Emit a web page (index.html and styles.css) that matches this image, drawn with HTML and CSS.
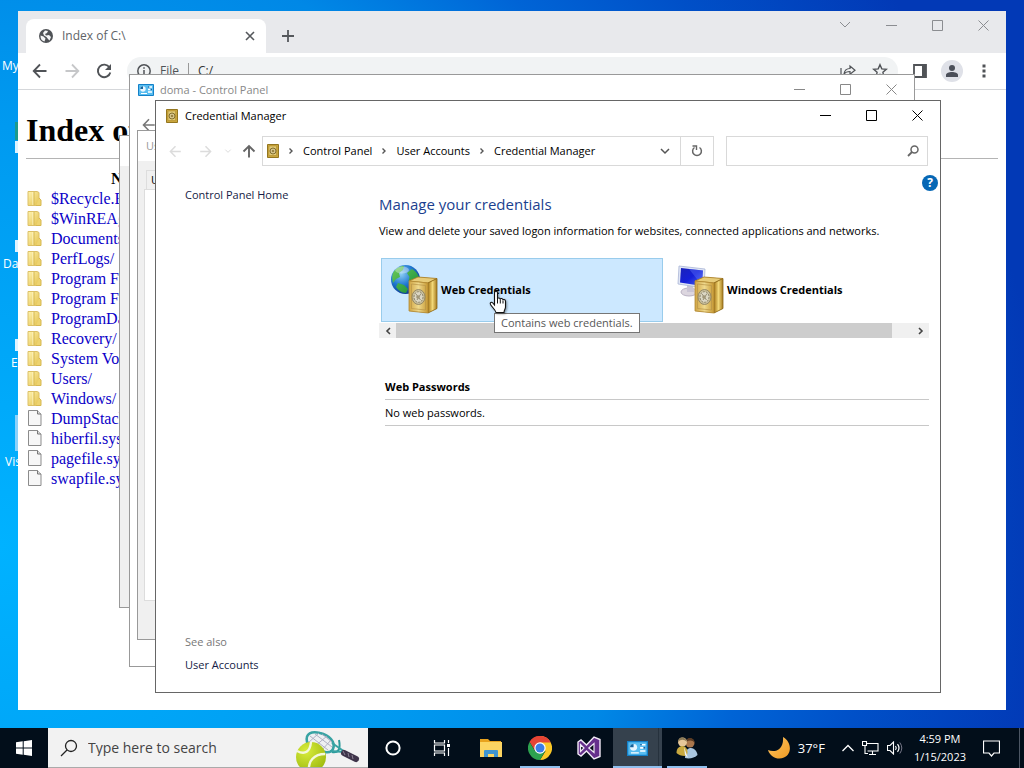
FILE: index.html
```html
<!DOCTYPE html>
<html lang="en">
<head>
    <meta charset="UTF-8">
    <title>Desktop</title>
    <link rel="stylesheet" href="styles.css">
</head>
<body>
    <svg class="sprite" aria-hidden="true">
        <defs>
            <linearGradient id="gold" x1="0" y1="0" x2="1" y2="0">
                <stop offset="0" stop-color="#d0a443"/><stop offset=".5" stop-color="#efd98d"/><stop offset="1" stop-color="#c69832"/>
            </linearGradient>
            <linearGradient id="goldSide" x1="0" y1="0" x2="1" y2="0">
                <stop offset="0" stop-color="#a87817"/><stop offset=".5" stop-color="#f2d878"/><stop offset="1" stop-color="#a57a1f"/>
            </linearGradient>
            <radialGradient id="globe" cx=".35" cy=".3" r=".8">
                <stop offset="0" stop-color="#8fd0f5"/><stop offset=".5" stop-color="#1f78d0"/><stop offset="1" stop-color="#0a2c80"/>
            </radialGradient>
            <linearGradient id="land" x1="0" y1="0" x2="1" y2="1">
                <stop offset="0" stop-color="#6ccb5a"/><stop offset="1" stop-color="#138a35"/>
            </linearGradient>
            <linearGradient id="screen" x1="0" y1="0" x2="1" y2="1">
                <stop offset="0" stop-color="#1a22b8"/><stop offset=".5" stop-color="#1520d8"/><stop offset="1" stop-color="#5068ee"/>
            </linearGradient>
            <linearGradient id="folder" x1="0" y1="0" x2="1" y2="1">
                <stop offset="0" stop-color="#fff3ae"/><stop offset="1" stop-color="#e3c14e"/>
            </linearGradient>
            <radialGradient id="ball" cx=".35" cy=".3" r=".8">
                <stop offset="0" stop-color="#d8ec3c"/><stop offset="1" stop-color="#9cb80c"/>
            </radialGradient>
            <linearGradient id="moon" x1="0" y1="0" x2="1" y2="1">
                <stop offset="0" stop-color="#ffc560"/><stop offset="1" stop-color="#ee9a24"/>
            </linearGradient>
        </defs>
        <symbol id="min" viewBox="0 0 11 11"><path d="M0 5.5h11" stroke="currentColor"/></symbol>
        <symbol id="max" viewBox="0 0 11 11"><path d="M.5.5h10v10H.5z" fill="none" stroke="currentColor"/></symbol>
        <symbol id="close" viewBox="0 0 11 11"><path d="M.5.5l10 10M10.5.5l-10 10" stroke="currentColor"/></symbol>
        <symbol id="left" viewBox="0 0 16 16"><path d="M14.5 8H2M8 1.5L1.7 8 8 14.5" fill="none" stroke="currentColor" stroke-width="1.8"/></symbol>
        <symbol id="right" viewBox="0 0 16 16"><path d="M1.5 8H14M8 1.5L14.3 8 8 14.5" fill="none" stroke="currentColor" stroke-width="1.8"/></symbol>
        <symbol id="chev" viewBox="0 0 8 8"><path d="M2.500 1.500L5 4 2.500 6.500" fill="none" stroke="currentColor" stroke-width="1.400"/></symbol>
        <symbol id="down" viewBox="0 0 12 8"><path d="M2 2l4 4 4-4" fill="none" stroke="currentColor" stroke-width="1.500"/></symbol>
        <symbol id="safe" viewBox="0 0 12 14">
            <path d="M.5.5h11v13H.5z" fill="#c9a53c" stroke="#94761f"/>
            <path d="M2 2h7.500v9.500H2z" fill="#e2cb78" stroke="#b28f2e" stroke-width=".6"/>
            <circle cx="6" cy="7" r="3" fill="#d5c48b" stroke="#786427" stroke-width=".9"/>
            <circle cx="6" cy="7" r="1.100" fill="#8a7433"/>
        </symbol>
        <symbol id="panel" viewBox="0 0 16 12">
            <path d="M.5.5h15v11H.5z" fill="#58bdf0" stroke="#1380c8"/>
            <circle cx="5" cy="5" r="2.700" fill="#e8f6ff"/><path d="M5 5V2.300A2.700 2.700 0 0 0 2.300 5z" fill="#17639c"/>
            <path d="M3 9.500h6" stroke="#fff"/><path d="M10 3h4M10 5.500h4M10 8h4" stroke="#fff" stroke-width="1.300"/><path d="M10 3h1.300M12.500 5.500h1.500" stroke="#1266a8" stroke-width="1.300"/>
        </symbol>
        <symbol id="bigsafe" viewBox="0 0 30 38">
            <path d="M1 5L10 1l19 1.500v30L20 37 1 35z" fill="#b8892a"/>
            <path d="M1 5l9-4 19 1.500L20 7z" fill="#e7cc79" stroke="#a77c24" stroke-width=".8"/>
            <path d="M20 7l9-4.500v30L20 37z" fill="url(#goldSide)" stroke="#8c681b" stroke-width=".8"/>
            <path d="M1 5l19 2v30L1 35z" fill="url(#gold)" stroke="#b38a35" stroke-width=".8"/>
            <path d="M3.500 8l14 1.500V34l-14-1.500z" fill="none" stroke="#b79347" stroke-width=".7"/>
            <ellipse cx="10.500" cy="21" rx="6.500" ry="7.500" fill="#c9bf9c" stroke="#8f8260" stroke-width=".9"/>
            <ellipse cx="10.500" cy="21" rx="4.500" ry="5.300" fill="#dcd7c4" stroke="#857e68" stroke-width=".9" stroke-dasharray="2 1"/>
            <path d="M8 18l4.500 6M13 17.500l-4 6.500" stroke="#8c846c" stroke-width=".9"/><circle cx="10" cy="21" r="1.800" fill="#a0977a"/>
        </symbol>
        <symbol id="dir" viewBox="0 0 16 17">
            <path d="M1 1.500h9l2 1v13H1z" fill="url(#folder)" stroke="#dcc067"/><path d="M6 2v13" stroke="#fff9d0"/><path d="M7 2v13M12 8l2 2v5.500H9" fill="#edd36f" stroke="#d6b852"/>
        </symbol>
        <symbol id="doc" viewBox="0 0 16 17"><path d="M1.500.5h9l3.500 3.500v11.500H1.500z" fill="#f7f7f7" stroke="#8b8b8b"/><path d="M10.500.5V4H14" fill="#ddd" stroke="#777"/></symbol>
    </svg>

    <main class="desktop">
        <span class="shortcut my">My</span>
        <span class="shortcut da">Da</span>
        <span class="shortcut e">E</span>
        <span class="shortcut vis">Vis</span>
        <i class="shard s1"></i><i class="shard s2"></i><i class="shard s3"></i><i class="shard s4"></i><i class="shard s5"></i>

        <section class="window chrome">
            <header class="tabstrip">
                <div class="tab">
                    <svg width="14" height="14" viewBox="0 0 14 14"><circle cx="7" cy="7" r="7" fill="#505357"/><path d="M1.500 6.500l3 1 2 2-1 3C3 12 1.300 10 1.500 6.500zM6 1.500l3 .5-1 2-2 1 1 1.500 3-.5 2 2-1.500 3.500L9 10 7.500 8 5 6.500 4 4z" fill="#f4f5f6"/></svg>
                    <span>Index of C:\</span>
                    <button class="plain" aria-label="Close tab"><svg width="10" height="10" viewBox="0 0 10 10"><path d="M1 1l8 8M9 1L1 9" stroke="#55585c" stroke-width="1.600"/></svg></button>
                </div>
                <button class="plain newtab" aria-label="New tab"><svg width="12" height="12" viewBox="0 0 12 12"><path d="M6 0v12M0 6h12" stroke="#55585c" stroke-width="1.800"/></svg></button>
                <div class="caption">
                    <button aria-label="Search tabs"><svg width="12" height="8" viewBox="0 0 12 8"><path d="M1 1l5 5 5-5" fill="none" stroke="currentColor"/></svg></button>
                    <button aria-label="Minimize"><svg width="11" height="11"><use href="#min"/></svg></button>
                    <button aria-label="Maximize"><svg width="11" height="11"><use href="#max"/></svg></button>
                    <button aria-label="Close"><svg width="11" height="11"><use href="#close"/></svg></button>
                </div>
            </header>
            <div class="toolbar">
                <button class="tool" aria-label="Back"><svg width="16" height="16"><use href="#left"/></svg></button>
                <button class="tool faded" aria-label="Forward"><svg width="16" height="16"><use href="#right"/></svg></button>
                <button class="tool" aria-label="Reload"><svg width="16" height="16" viewBox="0 0 16 16"><path d="M13.500 4.500A6.300 6.300 0 1 0 14.300 9.500" fill="none" stroke="currentColor" stroke-width="1.900"/><path d="M15 1v6H9z" fill="currentColor"/></svg></button>
                <div class="omnibox">
                    <svg width="14" height="14" viewBox="0 0 14 14"><circle cx="7" cy="7" r="6.200" fill="none" stroke="currentColor" stroke-width="1.500"/><path d="M7 6v4.500M7 3.300v1.500" stroke="currentColor" stroke-width="1.500"/></svg>
                    <span class="scheme">File</span>
                    <span class="path">C:/</span>
                    <button class="tool" aria-label="Share"><svg width="16" height="16" viewBox="0 0 16 16"><path d="M1 5v9h12v-3M4 11c.5-4 2.500-5.500 6-5.500V3l5 4.200-5 4V8.500C7 8.500 5.500 9 4 11z" fill="none" stroke="currentColor" stroke-width="1.200"/></svg></button>
                    <button class="tool" aria-label="Bookmark"><svg width="16" height="16" viewBox="0 0 16 16"><path d="M8 1.700l1.800 4.200 4.500.4-3.400 3 1 4.400L8 11.400l-3.900 2.300 1-4.400-3.400-3 4.500-.4z" fill="none" stroke="currentColor" stroke-width="1.400"/></svg></button>
                </div>
                <button class="tool" aria-label="Side panel"><svg width="14" height="14" viewBox="0 0 14 14"><path d="M1 1h12v12H1z" fill="none" stroke="currentColor" stroke-width="1.800"/><path d="M9 1h4v12H9z" fill="currentColor"/></svg></button>
                <button class="tool" aria-label="Profile"><svg width="22" height="22" viewBox="0 0 22 22"><circle cx="11" cy="11" r="11" fill="#dfe1e8"/><circle cx="11" cy="8" r="3" fill="#4b4f59"/><path d="M5 17v-2c0-2 3-3 6-3s6 1 6 3v2z" fill="#4b4f59"/></svg></button>
                <button class="tool" aria-label="Menu"><svg width="4" height="14" viewBox="0 0 4 14"><path d="M.5.5h3v3h-3zM.5 5.500h3v3h-3zM.5 10.500h3v3h-3z" fill="currentColor"/></svg></button>
            </div>
            <div class="listing">
                <h1>Index of C:\</h1>
                <table>
                    <thead><tr><th>Name</th></tr></thead>
                    <tbody>
                        <tr><td><svg><use href="#dir"/></svg><a href="#">$Recycle.Bin/</a></td></tr>
                        <tr><td><svg><use href="#dir"/></svg><a href="#">$WinREAgent/</a></td></tr>
                        <tr><td><svg><use href="#dir"/></svg><a href="#">Documents and Settings/</a></td></tr>
                        <tr><td><svg><use href="#dir"/></svg><a href="#">PerfLogs/</a></td></tr>
                        <tr><td><svg><use href="#dir"/></svg><a href="#">Program Files/</a></td></tr>
                        <tr><td><svg><use href="#dir"/></svg><a href="#">Program Files (x86)/</a></td></tr>
                        <tr><td><svg><use href="#dir"/></svg><a href="#">ProgramData/</a></td></tr>
                        <tr><td><svg><use href="#dir"/></svg><a href="#">Recovery/</a></td></tr>
                        <tr><td><svg><use href="#dir"/></svg><a href="#">System Volume Information/</a></td></tr>
                        <tr><td><svg><use href="#dir"/></svg><a href="#">Users/</a></td></tr>
                        <tr><td><svg><use href="#dir"/></svg><a href="#">Windows/</a></td></tr>
                        <tr><td><svg><use href="#doc"/></svg><a href="#">DumpStack.log.tmp</a></td></tr>
                        <tr><td><svg><use href="#doc"/></svg><a href="#">hiberfil.sys</a></td></tr>
                        <tr><td><svg><use href="#doc"/></svg><a href="#">pagefile.sys</a></td></tr>
                        <tr><td><svg><use href="#doc"/></svg><a href="#">swapfile.sys</a></td></tr>
                    </tbody>
                </table>
            </div>
        </section>

        <section class="window blank"></section>

        <section class="window doma">
            <header class="titlebar">
                <svg width="16" height="12"><use href="#panel"/></svg>
                <span>doma - Control Panel</span>
                <div class="caption">
                    <button aria-label="Minimize"><svg width="11" height="11"><use href="#min"/></svg></button>
                    <button aria-label="Maximize"><svg width="11" height="11"><use href="#max"/></svg></button>
                    <button aria-label="Close"><svg width="11" height="11"><use href="#close"/></svg></button>
                </div>
            </header>
            <button class="plain back" aria-label="Back"><svg width="14" height="14"><use href="#left"/></svg></button>
        </section>

        <section class="window users">
            <header>Us</header>
            <div class="sheet-tab">Us</div>
            <div class="sheet"></div>
        </section>

        <section class="window cred">
            <header class="titlebar">
                <svg width="12" height="14"><use href="#safe"/></svg>
                <span>Credential Manager</span>
                <div class="caption">
                    <button aria-label="Minimize"><svg width="11" height="11"><use href="#min"/></svg></button>
                    <button aria-label="Maximize"><svg width="11" height="11"><use href="#max"/></svg></button>
                    <button aria-label="Close"><svg width="11" height="11"><use href="#close"/></svg></button>
                </div>
            </header>
            <nav class="navrow">
                <button class="nav faded" aria-label="Back"><svg width="13" height="13"><use href="#left"/></svg></button>
                <button class="nav faded" aria-label="Forward"><svg width="13" height="13"><use href="#right"/></svg></button>
                <button class="recent faded" aria-label="Recent"><svg width="8" height="6"><use href="#down"/></svg></button>
                <button class="nav up" aria-label="Up"><svg width="14" height="14" viewBox="0 0 14 14"><path d="M7 13.500V2M1.500 7.500L7 2l5.500 5.500" fill="none" stroke="currentColor" stroke-width="1.900"/></svg></button>
                <div class="address">
                    <svg width="12" height="14"><use href="#safe"/></svg>
                    <svg class="sep"><use href="#chev"/></svg>
                    <a href="#">Control Panel</a>
                    <svg class="sep"><use href="#chev"/></svg>
                    <a href="#">User Accounts</a>
                    <svg class="sep"><use href="#chev"/></svg>
                    <a href="#">Credential Manager</a>
                    <button class="drop" aria-label="Previous locations"><svg width="12" height="8"><use href="#down"/></svg></button>
                    <button class="refresh" aria-label="Refresh"><svg width="12" height="12" viewBox="0 0 12 12"><path d="M8.500 2.500A4.400 4.400 0 1 1 3.500 2.500" fill="none" stroke="currentColor" stroke-width="1.500"/><path d="M1.500 1h4v4" fill="none" stroke="currentColor" stroke-width="1.400"/></svg></button>
                </div>
                <label class="find">
                    <input type="text" aria-label="Search Control Panel">
                    <svg width="12" height="12" viewBox="0 0 12 12"><circle cx="7.500" cy="4.500" r="3.500" fill="none" stroke="#666" stroke-width="1.500"/><path d="M5 7L1 11" stroke="#666" stroke-width="1.800"/></svg>
                </label>
            </nav>
            <div class="content">
                <aside>
                    <a href="#">Control Panel Home</a>
                    <div class="see">
                        <p>See also</p>
                        <a href="#">User Accounts</a>
                    </div>
                </aside>
                <div class="main">
                    <h2>Manage your credentials</h2>
                    <p>View and delete your saved logon information for websites, connected applications and networks.</p>
                    <div class="tiles">
                        <button class="tile selected">
                            <svg width="50" height="52" viewBox="0 0 50 52"><circle cx="14.500" cy="15.500" r="14.500" fill="url(#globe)"/><path d="M2 9C5 4 9 2 13 2l-1 4-4 3 1 4-4 2-3 4c-1-4-1-7 0-10zM16 9l5-4c5 3 8 8 7.500 13l-6 1-5-2 1-4zM7 19l6 2 4 4-2 4c-4 0-8-3-10-6z" fill="url(#land)"/><ellipse cx="11" cy="6" rx="7" ry="3.500" fill="#fff" opacity=".35"/><svg x="17" y="12" width="30" height="38"><use href="#bigsafe"/></svg></svg>
                            Web Credentials
                        </button>
                        <button class="tile">
                            <svg width="50" height="52" viewBox="0 0 50 52"><ellipse cx="12" cy="28" rx="8" ry="4" fill="#dcd6df" stroke="#b9b1c2"/><path d="M10 20h6l1 8h-7z" fill="#c9c4d4"/><path d="M2 2l26 3-1 19L1 20z" fill="#dfe5f5" stroke="#aab5d6" stroke-width=".8"/><path d="M4 4l22 2.500-1 15.500-22-3.500z" fill="url(#screen)"/><path d="M12 5l14 1.500-1 15z" fill="#6c83ff" opacity=".35"/><svg x="17" y="12" width="30" height="38"><use href="#bigsafe"/></svg></svg>
                            Windows Credentials
                        </button>
                    </div>
                    <div class="scrollbar">
                        <button class="plain" aria-label="Scroll left"><svg width="8" height="8" viewBox="0 0 8 8"><path d="M6 1L3 4l3 3" fill="none" stroke="#444" stroke-width="1.600"/></svg></button>
                        <div class="thumb"></div>
                        <button class="plain" aria-label="Scroll right"><svg width="8" height="8" viewBox="0 0 8 8"><path d="M2 1l3 3-3 3" fill="none" stroke="#444" stroke-width="1.600"/></svg></button>
                    </div>
                    <div class="vault">
                        <h3>Web Passwords</h3>
                        <p>No web passwords.</p>
                    </div>
                </div>
            </div>
            <button class="plain help" aria-label="Help">?</button>
        </section>

        <div class="tooltip" role="tooltip">Contains web credentials.</div>
        <svg class="cursor" width="18" height="24" viewBox="0 0 18 24"><path d="M5.500 15V3c0-2.500 3-2.500 3 0v6c0-1.500 2.800-1.500 2.800.5 0-1.500 2.700-1.300 2.700.7 0-1.200 2.500-1 2.500 1V17c0 2-1.500 3-1.500 5.500H7C6.500 20 3 17 1.500 14.500c-1-2 1-3 2.300-1.500z" fill="#fff" stroke="#111" stroke-width="1.100"/><path d="M8.500 9v4.500M11.300 9.500v4M14 10.500v3" stroke="#111"/></svg>
    </main>

    <footer class="taskbar">
        <button class="task" aria-label="Start"><svg width="16" height="16" viewBox="0 0 16 16"><path d="M0 2.300L6.700 1.300v6.300H0zM7.700 1.200L16 0v7.600H7.700zM0 8.500h6.700v6.300L0 13.800zM7.700 8.500H16V16l-8.300-1.200z" fill="#fff"/></svg></button>
        <label class="search">
            <svg width="18" height="18" viewBox="0 0 18 18"><circle cx="11" cy="7" r="5.500" fill="none" stroke="#222" stroke-width="1.300"/><path d="M7 11L1 17" stroke="#222" stroke-width="1.300"/></svg>
            <input type="text" placeholder="Type here to search" aria-label="Search">
            <svg width="66" height="38" viewBox="0 0 66 38"><path d="M37 23c6 1 9-2 7-12" fill="none" stroke="#2b9a9b" stroke-width="2"/><path d="M12 13C10 4 17 2 25 4c9 2 16 9 13 16-2 5-10 4-17-1z" fill="#eef0f2" stroke="#38a3a3" stroke-width="2.500"/><path d="M15 7l18 14M20 5l17 13M27 5l10 8M13 14L24 4M19 18L32 7M27 21l9-10" stroke="#a9a9bd" stroke-width=".9"/><path d="M37 14l13 9M35 22l14 1" stroke="#38a3a3" stroke-width="2"/><path d="M49 24l12 6" stroke="#3f344a" stroke-width="6" stroke-linecap="round"/><path d="M48 22l2 4M53 24l1 4M57 26l1 4" stroke="#8c8292"/><circle cx="16" cy="28" r="15" fill="url(#ball)"/><path d="M2 22c8 4 13 1 14-9M14 42c-1-10 5-17 16-17" fill="none" stroke="#f4f8dc" stroke-width="2.400"/></svg>
        </label>
        <button class="task" aria-label="Cortana"><svg width="16" height="16" viewBox="0 0 16 16"><circle cx="8" cy="8" r="6.600" fill="none" stroke="#fff" stroke-width="2"/></svg></button>
        <button class="task" aria-label="Task View"><svg width="18" height="16" viewBox="0 0 18 16"><path d="M1.500 0v3h10V0M1.500 5h10v6h-10zM1.500 16v-3h10v3M15.500 0v3M15.500 8v8" fill="none" stroke="#fff" stroke-width="1.200"/><path d="M14 4h3v3h-3z" fill="#fff"/></svg></button>
        <button class="task" aria-label="File Explorer"><svg width="22" height="18" viewBox="0 0 22 18"><path d="M0 0h8l2 2h11v3H0z" fill="#e8a21e"/><path d="M0 3h22v15H0z" fill="#fcd462"/><path d="M4 18v-6q0-1 1-1h12q1 0 1 1v6h-4v-3H8v3z" fill="#3f94d1"/></svg></button>
        <button class="task open" aria-label="Chrome"><svg width="24" height="24" viewBox="0 0 24 24"><path d="M12 12L1.600 6A12 12 0 0 1 22.400 6z" fill="#e64435"/><path d="M12 12V0a12 12 0 0 1 10.400 6A12 12 0 0 1 12 24l5.500-9z" fill="#fbc827"/><path d="M12 6.500H22.700A12 12 0 0 0 1.600 6l5.500 9z" fill="#e64435"/><path d="M1.600 6A12 12 0 0 0 12 24l5.200-9L7 15z" fill="#2da24f"/><circle cx="12" cy="12" r="5.700" fill="#fff"/><circle cx="12" cy="12" r="4.500" fill="#3d7de8"/></svg></button>
        <button class="task" aria-label="Visual Studio"><svg width="24" height="24" viewBox="0 0 24 24"><path d="M1 6l3-2 5.500 5L17 1l6 2.500v17L17 23l-7.500-8L4 20l-3-2z" fill="#66308c" stroke="#f2eaf7" stroke-width="1.400"/><path d="M3.500 8.500v7L7 12zM17 7.500v9L11.800 12z" fill="#070e18" stroke="#f2eaf7" stroke-width="1.200"/></svg></button>
        <button class="task open active" aria-label="Control Panel"><svg width="21" height="15" viewBox="0 0 16 12" preserveAspectRatio="none"><use href="#panel"/></svg></button>
        <button class="task open" aria-label="User Accounts"><svg width="22" height="24" viewBox="0 0 22 24"><circle cx="14" cy="7" r="4.500" fill="#a9764c"/><path d="M10 6c0-6 9-5 8.500 1-2-3-5-3-8.500-1z" fill="#5b3b23"/><path d="M9 22c0-8 3-10 6-10s6 3 6.500 7c-3 3-8 4-12.500 3z" fill="#a9c6e0"/><circle cx="6.500" cy="6" r="4.500" fill="#e6c79a"/><path d="M2 6C2 0 10 0 11 6 8 3 5 3 2 6z" fill="#8b7a55"/><path d="M.5 17c0-5 3-7 6-7s5 3 5 6-1 4-3 4c-3 0-6-1-8-3z" fill="#c9a93f"/><path d="M8 11l4 11-3-3z" fill="#eef2f5"/></svg></button>
        <div class="tray">
            <svg width="22" height="22" viewBox="0 0 22 22"><path d="M15 0c9 5 9 17 1 20.500C10 23.500 2 20 0 13c7 3 16 0 15-13z" fill="url(#moon)"/></svg>
            <span class="temp">37°F</span>
            <button class="plain" aria-label="Show hidden icons"><svg width="12" height="8" viewBox="0 0 12 8"><path d="M.5 7L6 1.500 11.500 7" fill="none" stroke="#fff" stroke-width="1.300"/></svg></button>
            <button class="plain" aria-label="Network"><svg width="17" height="14" viewBox="0 0 17 14"><path d="M5 2.500h11v7.500H5.500M10.500 10v3M7 13.500h7M3 5v7.500h3M.5.5h4v4h-4z" fill="none" stroke="#fff" stroke-width="1.100"/></svg></button>
            <button class="plain" aria-label="Volume"><svg width="16" height="14" viewBox="0 0 16 14"><path d="M.5 4.500h2.500L6.500 1v12L3 9.500H.5z" fill="none" stroke="#fff" stroke-width="1.100"/><path d="M8.500 5q1.500 2 0 4M10.500 3.200q3 3.800 0 7.600" fill="none" stroke="#fff" stroke-width="1.200"/><path d="M12.800 1.500q4 5.500 0 11" fill="none" stroke="#778"/></svg></button>
            <time class="clock">4:59 PM<br>1/15/2023</time>
            <button class="plain note" aria-label="Notifications"><svg width="17" height="17" viewBox="0 0 17 17"><path d="M.5 1h16v12H11l-2.500 3L6 13H.5z" fill="none" stroke="#fff" stroke-width="1.200"/></svg></button>
        </div>
    </footer>
</body>
</html>
```
FILE: styles.css
```css
* {
    box-sizing: border-box;
}
body {
    margin: 0;
    min-height: 100vh;
    display: flex;
    flex-direction: column;
    overflow: hidden;
    font-family: "Open Sans", "Noto Sans", sans-serif;
    font-size: 11px;
    line-height: 16px;
    color: #000;
}
h1, h2, h3, p {
    margin: 0;
}
a {
    text-decoration: none;
    color: inherit;
}
button, input {
    font: inherit;
    color: inherit;
    background: none;
    border: none;
    padding: 0;
}
button {
    display: flex;
    align-items: center;
    justify-content: center;
}
svg {
    flex: none;
    display: block;
}
.sprite {
    position: absolute;
    width: 0;
    height: 0;
}

/* desktop */
.desktop {
    position: relative;
    flex: 1;
    background: radial-gradient(circle at 0 75%, #00b2ff 0, #009af0 420px, #0088e6 620px, #0064d6 750px, #0050c8 870px, #0239b6 1050px);
}
.shortcut {
    position: absolute;
    color: #fff;
    font-size: 12px;
}
.my { left: 2px; top: 58px; }
.da { left: 3px; top: 256px; }
.e { left: 11px; top: 355px; }
.vis { left: 5px; top: 454px; }
.shard {
    position: absolute;
    left: 15px;
    width: 3px;
    height: 12px;
    background: #dff3ff;
}
.s1 { top: 122px; height: 18px; background: #1d9a8c; }
.s2 { top: 141px; }
.s3 { top: 240px; }
.s4 { top: 339px; }
.s5 { top: 415px; height: 36px; background: #8bd2fb; }

/* windows */
.window {
    position: absolute;
    background: #fff;
    overflow: hidden;
}
.caption {
    display: flex;
    margin-left: auto;
}
.caption button {
    width: 46px;
    height: 28px;
}
.plain {
    flex: none;
}
.titlebar {
    display: flex;
    align-items: center;
    height: 29px;
}

/* browser */
.chrome {
    left: 18px;
    right: 18px;
    top: 11px;
    bottom: 18px;
    font-size: 12px;
}
.tabstrip {
    display: flex;
    height: 42px;
    background: #e8e9ec;
    padding-left: 8px;
    color: #606367;
}
.tabstrip .caption {
    color: #8b8d91;
}
.tab {
    display: flex;
    align-items: center;
    gap: 9px;
    width: 240px;
    margin-top: 8px;
    padding: 0 11px 0 13px;
    background: #fff;
    border-radius: 8px 8px 0 0;
}
.tab span {
    flex: 1;
}
.newtab {
    width: 44px;
    margin-top: 8px;
}
.toolbar {
    display: flex;
    align-items: center;
    height: 37px;
    padding: 0 6px;
    border-bottom: 1px solid #d5d7da;
    color: #505357;
}
.tool {
    width: 32px;
    height: 28px;
}
.faded {
    color: #c6c7c9;
}
.omnibox {
    flex: 1;
    display: flex;
    align-items: center;
    height: 28px;
    margin: 0 6px 0 7px;
    padding: 0 2px 0 10px;
    background: #f1f3f4;
    border-radius: 14px;
}
.scheme {
    margin-left: 9px;
    padding-right: 9px;
    border-right: 1px solid #999;
}
.path {
    flex: 1;
    padding-left: 9px;
    color: #333;
}
.listing {
    padding: 0 8px;
    font-family: "Liberation Serif", serif;
    font-size: 16px;
    line-height: 18px;
    color: #000;
}
.listing h1 {
    padding: 22px 0 9px;
    font-size: 32px;
    line-height: 37px;
    border-bottom: 1px solid #b4b4b4;
}
.listing table {
    margin-top: 10px;
    border-spacing: 0;
}
.listing th {
    height: 20px;
    padding: 0;
}
.listing td {
    height: 20px;
    padding: 0;
}
.listing td svg {
    float: left;
    width: 16px;
    height: 17px;
    margin-left: 1px;
    margin-right: 8px;
}
.listing a {
    color: #0b00c8;
}

/* background windows */
.blank {
    left: 119px;
    top: 135px;
    width: 400px;
    height: 473px;
    border: 1px solid #999;
    background: linear-gradient(#fff 30px, #f0f0f0 30px);
}
.doma {
    left: 129px;
    top: 74px;
    width: 786px;
    height: 593px;
    border: 1px solid #999;
    color: #888;
}
.doma .titlebar {
    padding-left: 8px;
    gap: 6px;
}
.back {
    margin: 14px 0 0 12px;
    color: #777;
}
.users {
    left: 137px;
    top: 130px;
    width: 420px;
    height: 510px;
    border: 1px solid #999;
    background: #f0f0f0;
    display: flex;
    flex-direction: column;
    padding-bottom: 38px;
}
.users header {
    height: 30px;
    padding: 7px 8px;
    background: #fff;
    color: #999;
}
.sheet-tab {
    margin: 9px 0 0 8px;
    padding: 1px 4px;
    width: 60px;
    border: 1px solid #ddd;
    border-bottom: none;
}
.sheet {
    flex: 1;
    margin-left: 6px;
    background: #fff;
    border: 1px solid #ddd;
}

/* credential manager */
.cred {
    left: 155px;
    top: 100px;
    width: 786px;
    height: 593px;
    border: 1px solid #666;
    display: flex;
    flex-direction: column;
}
.cred .titlebar {
    padding-left: 10px;
    gap: 7px;
}
.navrow {
    display: flex;
    height: 30px;
    margin: 6px 12px 0 4px;
}
.nav {
    width: 30px;
}
.nav.faded, .recent {
    color: #dcdcdc;
}
.recent {
    width: 16px;
}
.up {
    width: 26px;
    color: #666;
}
.address {
    flex: 1;
    display: flex;
    align-items: center;
    padding-left: 4px;
    border: 1px solid #d9d9d9;
}
.sep {
    width: 8px;
    height: 8px;
    margin: 0 8px;
    color: #555;
}
.drop {
    width: 30px;
    margin-left: auto;
    color: #555;
}
.refresh {
    align-self: stretch;
    width: 33px;
    border-left: 1px solid #d9d9d9;
    color: #666;
}
.find {
    display: flex;
    align-items: center;
    width: 202px;
    margin-left: 12px;
    padding: 0 8px;
    border: 1px solid #d9d9d9;
}
.find input {
    flex: 1;
    min-width: 0;
}
.content {
    flex: 1;
    display: flex;
}
aside {
    width: 223px;
    padding: 21px 0 19px 29px;
    display: flex;
    flex-direction: column;
    justify-content: space-between;
    color: #151c45;
}
.see p {
    margin-bottom: 7px;
    color: #777;
}
.main {
    flex: 1;
    min-width: 0;
    padding: 27px 11px 0 0;
}
.main h2 {
    font-size: 15px;
    line-height: 22px;
    font-weight: 400;
    color: #1b3f8f;
}
.main > p {
    margin-top: 8px;
    white-space: nowrap;
}
.tiles {
    display: flex;
    gap: 4px;
    margin: 19px 0 1px 2px;
    overflow: hidden;
}
.tile {
    flex: none;
    width: 282px;
    height: 64px;
    padding-left: 9px;
    justify-content: flex-start;
    border: 1px solid transparent;
    font-weight: 700;
}
.selected {
    background: #cce8ff;
    border-color: #99ccec;
}
.scrollbar {
    display: flex;
    height: 15px;
    background: #f0f0f0;
}
.scrollbar button {
    width: 17px;
}
.thumb {
    flex: 1;
    margin-right: 20px;
    background: #cdcdcd;
}
.vault {
    margin: 36px 0 0 6px;
}
.vault h3, .vault p {
    font-size: 11px;
    line-height: 16px;
    padding: 5px 0 4px;
    border-bottom: 1px solid #c8c8c8;
}
.help {
    position: absolute;
    right: 2px;
    top: 74px;
    width: 16px;
    height: 16px;
    border-radius: 50%;
    background: #0667b5;
    color: #fff;
    font-size: 12px;
    font-weight: 700;
}
.tooltip {
    position: absolute;
    left: 494px;
    top: 313px;
    padding: 1px 6px;
    background: #fff;
    border: 1px solid #767676;
    color: #575757;
}
.cursor {
    position: absolute;
    left: 489px;
    top: 290px;
    filter: drop-shadow(1px 1px 1px rgba(0,0,0,0.4));
}

/* taskbar */
.taskbar {
    display: flex;
    height: 40px;
    background: #020e1a;
    color: #fff;
}
.task {
    position: relative;
    width: 49px;
}
.task:first-child {
    width: 48px;
}
.open::after {
    content: "";
    position: absolute;
    left: 5px;
    right: 4px;
    bottom: 0;
    height: 2px;
    background: #8fbfee;
}
.active {
    background: linear-gradient(90deg, #35414d 45px, #17222d 45px, #35414d 46px);
}
.active::after {
    left: 0;
    right: 0;
}
.search {
    display: flex;
    align-items: center;
    width: 320px;
    padding: 1px 7px 0 12px;
    background: #f2f2f2;
    border-bottom: 1px solid #aaa;
    color: #333;
}
.search input {
    flex: 1;
    min-width: 0;
    margin-left: 10px;
    font-size: 14px;
}
.search input::placeholder {
    color: #444;
    opacity: 1;
}
.tray {
    flex: 1;
    display: flex;
    align-items: center;
    justify-content: flex-end;
    margin-right: 4px;
    padding-right: 19px;
    border-right: 1px solid #4c5664;
    gap: 8px;
}
.temp {
    font-size: 13px;
    margin-right: 9px;
}
.clock {
    text-align: center;
    line-height: 18px;
    margin-left: 3px;
}
.note {
    margin-left: 9px;
}
```
